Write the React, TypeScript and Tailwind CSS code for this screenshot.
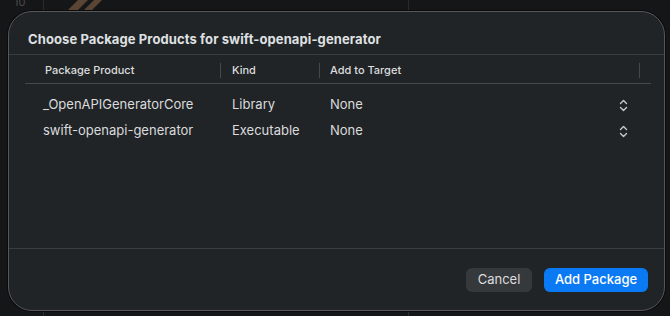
const rows = [
    { product: '_OpenAPIGeneratorCore', kind: 'Library', target: 'None' },
    { product: 'swift-openapi-generator', kind: 'Executable', target: 'None' },
]

function Stepper() {
    return (
        <svg width="9" height="13" viewBox="0 0 9 13" fill="none" className="text-[#c9cacb]">
            <path d="M1.5 4.5 L4.5 1.5 L7.5 4.5" stroke="currentColor" strokeWidth="1.4" strokeLinecap="round" strokeLinejoin="round" />
            <path d="M1.5 8.5 L4.5 11.5 L7.5 8.5" stroke="currentColor" strokeWidth="1.4" strokeLinecap="round" strokeLinejoin="round" />
        </svg>
    )
}

export default function App() {
    return (
        <div
            className="relative h-[316px] w-[670px] overflow-hidden bg-[#151617] pl-[8px] pt-[11px]"
            style={{ fontFamily: 'Inter, "Noto Sans", sans-serif' }}
        >
            {/* editor behind the sheet */}
            <div className="absolute left-[14px] top-[-6px] text-[11px] text-[#4a4b4d]">10</div>
            <div className="absolute left-[43px] top-0 h-full w-px bg-[#2a2b2d]" />
            <div className="absolute left-[408px] top-0 h-full w-px bg-[#2a2b2d]" />
            <svg className="absolute left-[62px] top-0" width="44" height="12" viewBox="0 0 44 12">
                <path d="M4 12 L16 0 L26 0 L14 12 Z" fill="#5a4433" />
                <path d="M20 12 L32 0 L40 0 L28 12 Z" fill="#5a4433" />
            </svg>

            <div className="relative flex h-[300px] w-[657px] flex-col rounded-[24px] border border-[#55575a] bg-[#212427] shadow-[0_0_0_1px_#0b0b0c]">
                <div className="flex h-[42px] items-end pb-[5px] pl-[19px]">
                    <h1 className="text-[13px] font-bold tracking-[0.1px] text-[#dfe0e1]">
                        Choose Package Products for swift-openapi-generator
                    </h1>
                </div>
                <div className="h-px bg-[#3a3d40]" />

                <div className="pl-[16px] pr-[13px]">
                    <div className="flex h-[29px] items-center border-b border-[#46494c] pt-[2px] text-[11px] font-medium text-[#dcdddd]">
                        <div className="flex h-full w-[196px] items-center justify-between pl-[20px]">
                            <span>Package Product</span>
                            <span className="h-[15px] w-px bg-[#46494c]" />
                        </div>
                        <div className="flex h-full w-[99px] items-center justify-between pl-[11px]">
                            <span>Kind</span>
                            <span className="h-[15px] w-px bg-[#46494c]" />
                        </div>
                        <div className="flex h-full w-[320px] items-center justify-between pl-[10px]">
                            <span>Add to Target</span>
                            <span className="h-[15px] w-px bg-[#46494c]" />
                        </div>
                    </div>

                    <div className="pt-[8px]">
                        {rows.map(r => (
                            <div
                                key={r.product}
                                className="flex h-[26px] items-center text-[13px] text-[#dadbdc]"
                            >
                                <div className="w-[207px] pl-[18px]">{r.product}</div>
                                <div className="w-[98px]">{r.kind}</div>
                                <div className="flex w-[302px] items-center justify-between pr-[4px]">
                                    <span>{r.target}</span>
                                    <Stepper />
                                </div>
                            </div>
                        ))}
                    </div>
                </div>

                <div className="flex-1" />
                <div className="h-px bg-[#3a3d40]" />
                <div className="flex h-[61px] items-start justify-end gap-[12px] pr-[16px] pt-[19px]">
                    <button className="flex h-[24px] w-[66px] items-center justify-center rounded-[6px] bg-[#36393c] text-[13px] text-[#dcdddd]">
                        Cancel
                    </button>
                    <button className="flex h-[24px] w-[104px] items-center justify-center rounded-[6px] bg-[#0a79f4] text-[13px] font-medium text-white">
                        Add Package
                    </button>
                </div>
            </div>
        </div>
    )
}
